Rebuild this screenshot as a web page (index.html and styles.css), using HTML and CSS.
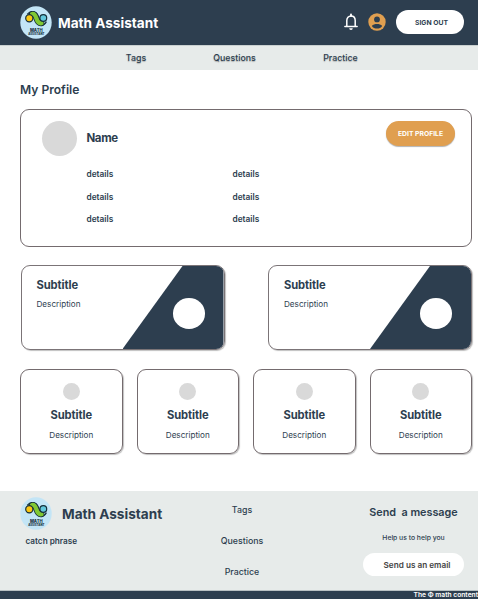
FILE: index.html
```html
<!DOCTYPE html>
<html lang="en">
<head>
<meta charset="utf-8">
<title>Math Assistant</title>
<link rel="stylesheet" href="styles.css">
</head>
<body>
<header class="header">
  <svg class="logo" viewBox="0 0 32 33">
    <ellipse cx="16" cy="16.500" rx="15.700" ry="16.300" fill="#c3e5f6"/>
    <path d="M7.200 8.300C9.800 4.800 15.500 4.200 17.600 8.800C19 12 19.800 14.700 21.200 15.400" fill="none" stroke="#15303b" stroke-width="1.200"/>
    <path d="M12 8C15 7.400 15.700 10.200 16.400 12.400C17.300 15.300 18.500 17.700 21.500 17.200" fill="none" stroke="#15303b" stroke-width="6" stroke-linecap="round"/>
    <path d="M21 19.300C23.500 19.200 25.300 17.700 26.400 15.600" fill="none" stroke="#15303b" stroke-width="1.200"/>
    <path d="M12 8C15 7.400 15.700 10.200 16.400 12.400C17.300 15.300 18.500 17.700 21.500 17.200" fill="none" stroke="#80c832" stroke-width="4.300" stroke-linecap="round"/>
    <circle cx="9.300" cy="12.200" r="3.600" fill="#fbc711" stroke="#15303b" stroke-width="1.200"/>
    <circle cx="23.300" cy="12" r="3.400" fill="#62c8dc" stroke="#15303b" stroke-width="1.200"/>
    <text x="16.300" y="25.700" class="logo-math">MATH</text>
    <text x="16.300" y="29.100" class="logo-assistant">ASSISTANT</text>
  </svg>
  <span class="brand">Math Assistant</span>
  <svg class="bell" viewBox="0 0 14 18" fill="none" stroke="#fff">
    <path d="M2.800 13V7.600C2.800 4.900 4.500 3 7 3S11.200 4.900 11.200 7.600V13" stroke-width="1.500"/>
    <path d="M.9 13.400H13.100" stroke-width="1.500" stroke-linecap="round"/>
    <path d="M7 1.600V3" stroke-width="2" stroke-linecap="round"/>
    <path d="M5.200 15.300H8.800A1.800 1.800 0 0 1 5.200 15.300Z" fill="#fff" stroke="none"/>
  </svg>
  <svg class="account" viewBox="0 0 18 18">
    <circle cx="9" cy="9" r="8.700" fill="#e09f50"/>
    <circle cx="9" cy="6.400" r="2.900" fill="#2d3e4f"/>
    <path d="M3.800 12.900C5 11.300 7 10.900 9 10.900S13 11.300 14.200 12.900C13 14.700 11.200 15.600 9 15.600S5 14.700 3.800 12.900Z" fill="#2d3e4f"/>
  </svg>
  <button class="sign-out">SIGN OUT</button>
</header>

<nav class="nav">
  <a>Tags</a><a>Questions</a><a>Practice</a>
</nav>

<main class="main">
  <h1 class="title">My Profile</h1>
  <section class="profile">
    <div class="profile-head">
      <div class="avatar"></div>
      <h2 class="name">Name</h2>
      <button class="edit">EDIT PROFILE</button>
    </div>
    <div class="details">
      <span>details</span><span>details</span>
      <span>details</span><span>details</span>
      <span>details</span><span>details</span>
    </div>
  </section>

  <section class="wide-cards">
    <article class="wide-card">
      <div class="wide-text"><h3>Subtitle</h3><p>Description</p></div>
      <div class="wide-art"><div class="dot"></div></div>
    </article>
    <article class="wide-card">
      <div class="wide-text"><h3>Subtitle</h3><p>Description</p></div>
      <div class="wide-art"><div class="dot"></div></div>
    </article>
  </section>

  <section class="small-cards">
    <article class="small-card"><div class="disc"></div><h3>Subtitle</h3><p>Description</p></article>
    <article class="small-card"><div class="disc"></div><h3>Subtitle</h3><p>Description</p></article>
    <article class="small-card"><div class="disc"></div><h3>Subtitle</h3><p>Description</p></article>
    <article class="small-card"><div class="disc"></div><h3>Subtitle</h3><p>Description</p></article>
  </section>
</main>

<footer class="footer">
  <div class="footer-brand">
    <div class="footer-logo">
      <svg class="logo" viewBox="0 0 32 33">
        <ellipse cx="16" cy="16.500" rx="15.700" ry="16.300" fill="#c3e5f6"/>
        <path d="M7.200 8.300C9.800 4.800 15.500 4.200 17.600 8.800C19 12 19.800 14.700 21.200 15.400" fill="none" stroke="#15303b" stroke-width="1.200"/>
        <path d="M12 8C15 7.400 15.700 10.200 16.400 12.400C17.300 15.300 18.500 17.700 21.500 17.200" fill="none" stroke="#15303b" stroke-width="6" stroke-linecap="round"/>
        <path d="M21 19.300C23.500 19.200 25.300 17.700 26.400 15.600" fill="none" stroke="#15303b" stroke-width="1.200"/>
        <path d="M12 8C15 7.400 15.700 10.200 16.400 12.400C17.300 15.300 18.500 17.700 21.500 17.200" fill="none" stroke="#80c832" stroke-width="4.300" stroke-linecap="round"/>
        <circle cx="9.300" cy="12.200" r="3.600" fill="#fbc711" stroke="#15303b" stroke-width="1.200"/>
        <circle cx="23.300" cy="12" r="3.400" fill="#62c8dc" stroke="#15303b" stroke-width="1.200"/>
        <text x="16.300" y="25.700" class="logo-math">MATH</text>
        <text x="16.300" y="29.100" class="logo-assistant">ASSISTANT</text>
      </svg>
      <span class="brand">Math Assistant</span>
    </div>
    <p class="catch">catch phrase</p>
  </div>
  <div class="footer-links"><a>Tags</a><a>Questions</a><a>Practice</a></div>
  <div class="contact">
    <h4>Send&nbsp; a message</h4>
    <p>Help us to help you</p>
    <button class="email">Send us an email</button>
  </div>
</footer>
<div class="bottom"><span>The Φ math content</span></div>
</body>
</html>
```

FILE: styles.css
```css
* { box-sizing: border-box; }
body {
  margin: 0;
  width: 478px;
  height: 599px;
  overflow: hidden;
  background: #fff;
  color: #2d3e4f;
  font-family: Inter, "Liberation Sans", sans-serif;
  white-space: nowrap;
}
h1, h2, h3, h4, p { margin: 0; }
button { border: 0; padding: 0; font-family: inherit; color: inherit; }
.logo { width: 32px; height: 33px; flex: none; }
.logo-math, .logo-assistant { font-weight: 800; text-anchor: middle; fill: #15303b; }
.logo-math { font-size: 4.2px; }
.logo-assistant { font-size: 2.8px; }
.brand { font-size: 13.6px; font-weight: 700; line-height: 20px; }

.header {
  height: 45px;
  display: flex;
  align-items: center;
  padding: 0 14px 0 20px;
  background: #2d3e4f;
}
.header .brand { margin-left: 6px; color: #fff; }
.bell { width: 14px; height: 18px; margin: 0 0 1px auto; }
.account { width: 18px; height: 18px; margin: 0 10px 1px 10.5px; }
.sign-out {
  width: 68px;
  height: 24px;
  margin-bottom: 1px;
  border-radius: 12px;
  background: #fff;
  font-size: 6.8px;
  font-weight: 700;
  padding-left: 3px;
}

.nav {
  height: 24.5px;
  display: grid;
  grid-template-columns: 68px 129px 83px;
  padding-left: 102px;
  text-align: center;
  background: #e7ebea;
  border-top: 1px solid #c9d0d0;
  font-size: 8.8px;
  line-height: 24px;
  font-weight: 450;
  text-shadow: 0 1px 1px rgba(0, 0, 0, .25);
}

.main { height: 421px; padding: 10px 6px 0 20px; }
.title { font-size: 12.1px; font-weight: 600; line-height: 20px; }

.profile {
  width: 452px;
  height: 138px;
  margin-top: 9.5px;
  padding: 11px 16px 0 21px;
  border: 1px solid #746b6e;
  border-radius: 9px;
}
.profile-head { display: flex; height: 35px; }
.avatar { width: 35px; height: 35px; border-radius: 50%; background: #d9d9d9; }
.name { margin-left: 9.5px; font-size: 11.5px; letter-spacing: -.4px; line-height: 35px; }
.edit {
  width: 69px;
  height: 24.5px;
  margin-left: auto;
  border-radius: 13px;
  background: #e09f50;
  color: #fff;
  font-size: 6.8px;
  font-weight: 700;
  box-shadow: 0 1px 1px rgba(0, 0, 0, .3);
}
.details {
  display: grid;
  grid-template-columns: 146px 146px;
  grid-auto-rows: 22.5px;
  padding: 7px 0 0 44.5px;
  font-size: 8.3px;
  font-weight: 600;
  line-height: 22.5px;
}

.wide-cards { display: flex; justify-content: space-between; margin-top: 18px; padding-left: .5px; }
.wide-card {
  width: 204px;
  height: 85px;
  display: flex;
  justify-content: space-between;
  border: 1px solid #7b7477;
  border-radius: 9px;
  overflow: hidden;
  box-shadow: 1px 1px 1px rgba(0, 0, 0, .25);
}
.wide-text { padding: 10.5px 0 0 15px; }
h3 { font-size: 11.2px; letter-spacing: -.1px; font-weight: 700; line-height: 16px; }
.wide-text p, .small-card p { font-size: 8.15px; line-height: 12px; }
.wide-text p { margin-top: 5px; }
.wide-art {
  width: 101px;
  height: 83px;
  padding: 32px 0 0 50px;
  background: #2d3e4f;
  clip-path: polygon(60px 0, 100% 0, 100% 100%, 0 100%);
}
.dot { width: 32px; height: 30.5px; border-radius: 50%; background: #fff; }

.small-cards { display: flex; justify-content: space-between; margin-top: 18.5px; }
.small-card {
  width: 102.5px;
  height: 85px;
  padding-top: 13px;
  text-align: center;
  border: 1px solid #746b6e;
  border-radius: 9px;
  box-shadow: 1px 1px 1px rgba(0, 0, 0, .25);
}
.disc { width: 17px; height: 17px; margin: 0 auto; border-radius: 50%; background: #d9d9d9; }
.small-card h3 { margin-top: 7px; }
.small-card p { margin-top: 6px; }

.footer { height: 100px; display: flex; background: #e7ebea; border-bottom: 1px solid #b8c0c2; }
.footer-brand { width: 202px; padding: 6.5px 0 0 20px; }
.footer-logo { display: flex; align-items: center; height: 33px; }
.footer-logo .brand { margin-left: 10px; }
.catch { margin: 5px 0 0 5.5px; font-size: 8.2px; font-weight: 600; line-height: 13px; }
.footer-links {
  width: 80px;
  display: flex;
  flex-direction: column;
  gap: 19px;
  padding-top: 13px;
  text-align: center;
  font-size: 8.8px;
  font-weight: 500;
  line-height: 12px;
}
.contact { width: 102px; margin-left: 80.5px; text-align: center; }
.contact h4 { margin-top: 14px; font-size: 10.8px; font-weight: 600; line-height: 16px; }
.contact p { margin-top: 11.5px; font-size: 6.8px; font-weight: 500; line-height: 12px; }
.email {
  width: 101px;
  height: 23px;
  margin-top: 9px;
  padding-left: 7px;
  border-radius: 12px;
  background: #fff;
  color: #444;
  font-size: 8.2px;
  font-weight: 600;
}
.bottom {
  height: 9px;
  padding-left: 413.5px;
  background: #2d3e4f;
  color: #fff;
  font-size: 6.7px;
  font-weight: 600;
  line-height: 9px;
}
```
